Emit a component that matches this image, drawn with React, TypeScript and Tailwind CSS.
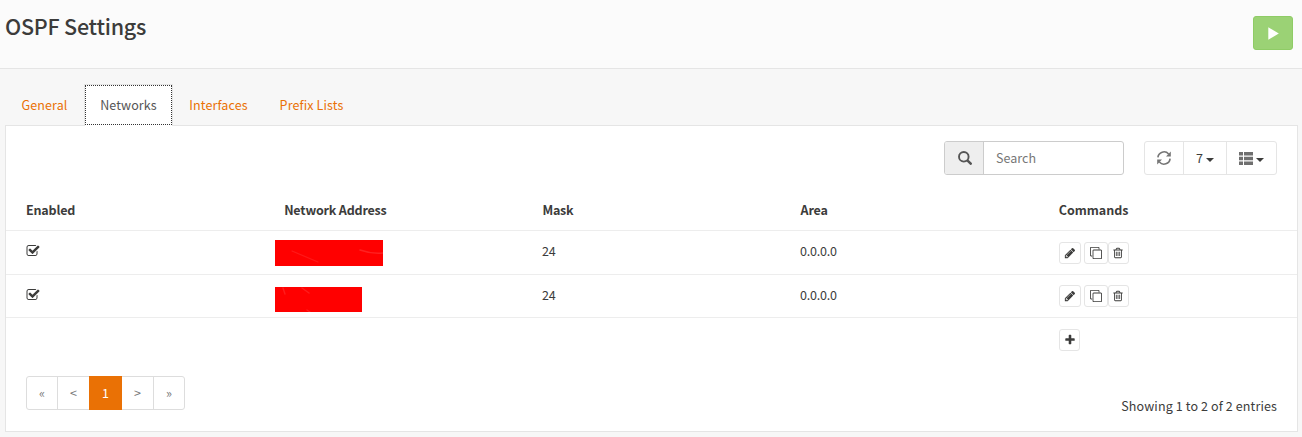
import React from "react";

const icons = {
  check:
    "M1472 930v318q0 119-84.5 203.5t-203.5 84.5h-832q-119 0-203.5-84.5t-84.5-203.5v-832q0-119 84.5-203.5t203.5-84.5h832q63 0 117 25 15 7 18 23 3 17-9 29l-49 49q-10 10-23 10-3 0-9-2-23-6-45-6h-832q-66 0-113 47t-47 113v832q0 66 47 113t113 47h832q66 0 113-47t47-113v-254q0-13 9-22l64-64q10-10 23-10 6 0 12 3 20 8 20 29zm231-489l-814 814q-24 24-57 24t-57-24l-430-430q-24-24-24-57t24-57l110-110q24-24 57-24t57 24l263 263 647-647q24-24 57-24t57 24l110 110q24 24 24 57t-24 57z",
  pencil:
    "M491 1536l91-91-235-235-91 91v107h128v128h107zm523-928q0-22-22-22-10 0-17 7l-542 542q-7 7-7 17 0 22 22 22 10 0 17-7l542-542q7-7 7-17zm-54-192l416 416-832 832h-416v-416zm683 96q0 53-37 90l-166 166-416-416 166-165q36-38 90-38 53 0 91 38l235 234q37 39 37 91z",
  clone:
    "M1664 1632v-1088q0-13-9.5-22.5t-22.5-9.5h-1088q-13 0-22.5 9.5t-9.5 22.5v1088q0 13 9.5 22.5t22.5 9.5h1088q13 0 22.5-9.5t9.5-22.5zm128-1088v1088q0 66-47 113t-113 47h-1088q-66 0-113-47t-47-113v-1088q0-66 47-113t113-47h1088q66 0 113 47t47 113zm-384-384v160h-128v-160q0-13-9.5-22.5t-22.5-9.5h-1088q-13 0-22.5 9.5t-9.5 22.5v1088q0 13 9.5 22.5t22.5 9.5h160v128h-160q-66 0-113-47t-47-113v-1088q0-66 47-113t113-47h1088q66 0 113 47t47 113z",
  trash:
    "M704 736v576q0 14-9 23t-23 9h-64q-14 0-23-9t-9-23v-576q0-14 9-23t23-9h64q14 0 23 9t9 23zm256 0v576q0 14-9 23t-23 9h-64q-14 0-23-9t-9-23v-576q0-14 9-23t23-9h64q14 0 23 9t9 23zm256 0v576q0 14-9 23t-23 9h-64q-14 0-23-9t-9-23v-576q0-14 9-23t23-9h64q14 0 23 9t9 23zm128 724v-948h-896v948q0 22 7 40.5t14.5 27 10.5 8.5h832q3 0 10.5-8.5t14.5-27 7-40.5zm-672-1076h448l-48-117q-7-9-17-11h-317q-10 2-17 11zm928 32v64q0 14-9 23t-23 9h-96v948q0 83-47 143.5t-113 60.5h-832q-66 0-113-58.5t-47-141.5v-952h-96q-14 0-23-9t-9-23v-64q0-14 9-23t23-9h309l70-167q15-37 54-63t79-26h320q40 0 79 26t54 63l70 167h309q14 0 23 9t9 23z",
  plus:
    "M1600 736v192q0 40-28 68t-68 28h-416v416q0 40-28 68t-68 28h-192q-40 0-68-28t-28-68v-416h-416q-40 0-68-28t-28-68v-192q0-40 28-68t68-28h416v-416q0-40 28-68t68-28h192q40 0 68 28t28 68v416h416q40 0 68 28t28 68z",
};

function Icon({ name, className }: { name: keyof typeof icons; className: string }) {
  return (
    <svg viewBox="0 0 1792 1792" fill="currentColor" className={className}>
      <path d={icons[name]} />
    </svg>
  );
}

function SearchIcon() {
  return (
    <svg viewBox="0 0 14 14" className="ml-px size-3.5" fill="none" stroke="#555">
      <circle cx="5.8" cy="5.8" r="4.8" strokeWidth="1.9" />
      <path d="M9.6 9.6l3.1 3.1" strokeWidth="2.5" strokeLinecap="round" />
    </svg>
  );
}

function RefreshIcon() {
  return (
    <svg viewBox="0 0 14 14" className="size-3.5" fill="none" stroke="#757575" strokeWidth="1.6">
      <path d="M0.9 6.4A6.1 6.1 0 0 1 11.6 3" />
      <path d="M13.1 7.6A6.1 6.1 0 0 1 2.4 11" />
      <path d="M13.8 0.4v5H9z" fill="#757575" stroke="none" />
      <path d="M0.2 13.6v-5H5z" fill="#757575" stroke="none" />
    </svg>
  );
}

function ListIcon() {
  return (
    <svg viewBox="0 0 14 13" className="h-[13px] w-3.5" fill="#6f6f6f">
      <path d="M0 0h4v3.6H0zM5 0h9v3.6H5zM0 4.7h4v3.6H0zM5 4.7h9v3.6H5zM0 9.4h4V13H0zM5 9.4h9V13H5z" />
    </svg>
  );
}

function Caret() {
  return (
    <svg viewBox="0 0 8 4" className="mt-[3px] h-1 w-2" fill="#3c3c3b">
      <path d="M0 0h8L4 4z" />
    </svg>
  );
}

const headers = ["Enabled", "Network Address", "Mask", "Area", "Commands"];

function Commands() {
  return (
    <div className="flex text-[#3c3c3b]">
      <button className="mr-[3px] flex h-[22px] w-[22px] items-center justify-center rounded-[3px] border border-[#e5e5e5] bg-white">
        <Icon name="pencil" className="size-3" />
      </button>
      <button className="flex h-[22px] w-6 items-center justify-center rounded-[3px] border border-[#e5e5e5] bg-white">
        <Icon name="clone" className="size-3" />
      </button>
      <button className="flex h-[22px] w-[21px] items-center justify-center rounded-[3px] border border-[#e5e5e5] bg-white">
        <Icon name="trash" className="size-3" />
      </button>
    </div>
  );
}

export default function App() {
  return (
    <div className="h-[437px] w-[1302px] overflow-hidden bg-[#f7f7f7] font-['Noto_Sans_CJK_SC',sans-serif] text-[12.54px] leading-5 tracking-[0.11px] text-[#3c3c3b]">
      <header className="flex h-[69px] justify-between border-b border-[#e5e5e5] bg-[#fbfbfb] pr-[9px] pl-[5px]">
        <h1 className="mt-3 text-[21.5px] leading-7 font-medium tracking-[-0.23px]">OSPF Settings</h1>
        <button className="mt-4 flex h-[34px] w-10 items-center justify-center rounded-[3px] border border-[#8fcc66] bg-[#9bd275]">
          <svg viewBox="0 0 11 13" className="h-[13px] w-[11px]" fill="#fff">
            <path d="M0.3 0.3L10.8 6.5L0.3 12.7z" />
          </svg>
        </button>
      </header>

      <nav className="relative z-10 -mb-px flex h-[57px] items-end pl-[5px] text-[#ea7105]">
        <a className="flex h-[42px] w-[79px] items-center justify-center">General</a>
        <a className="h-[42px] w-[89px] border border-b-0 border-[#e5e5e5] bg-white pb-px text-[#555]">
          <span className="flex h-10 items-center justify-center border border-dotted border-[#333]">Networks</span>
        </a>
        <a className="flex h-[42px] w-[91px] items-center justify-center">Interfaces</a>
        <a className="flex h-[42px] w-[95px] items-center justify-center">Prefix Lists</a>
      </nav>

      <main className="ml-[5px] h-[307px] w-[1293px] border border-[#e5e5e5] bg-white">
        <div className="flex h-[64px] justify-end gap-5 pt-[15px] pr-5">
          <div className="flex h-[34px] w-[180px] overflow-hidden rounded-[3px] border border-[#ccc]">
            <span className="flex w-[39px] items-center justify-center border-r border-[#ccc] bg-[#eee]">
              <SearchIcon />
            </span>
            <input
              placeholder="Search"
              className="w-[139px] px-3 leading-5 tracking-normal outline-none placeholder:text-[#777]"
            />
          </div>
          <div className="flex h-[34px] w-[133px] rounded-[3px] border border-[#e5e5e5]">
            <button className="flex w-[39px] items-center justify-center border-r border-[#e5e5e5]">
              <RefreshIcon />
            </button>
            <button className="flex w-[43px] items-center justify-center gap-[3px] border-r border-[#e5e5e5]">
              7<Caret />
            </button>
            <button className="flex w-[49px] items-center justify-center gap-[3px]">
              <ListIcon />
              <Caret />
            </button>
          </div>
        </div>

        <div className="grid h-[41px] grid-cols-5 border-b border-[#ededed] pt-[10px] font-bold tracking-[-0.2px]">
          {headers.map((h) => (
            <div key={h} className={h === "Commands" ? "pl-5 tracking-[-0.05px]" : "pl-5"}>
              {h}
            </div>
          ))}
        </div>
        <div className="grid h-11 grid-cols-5 border-b border-[#ededed] tracking-[-0.2px]">
          <div className="pt-[13px] pl-5">
            <Icon name="check" className="size-3.5" />
          </div>
          <div className="pt-[9px] pl-[11px]">
            <svg viewBox="0 0 108 26" className="h-[26px] w-[108px] bg-[#f00]" fill="none" strokeLinecap="round">
              <path d="M17 11L43 22" stroke="#ff1818" strokeWidth="1.2" />
              <path d="M85 10Q96 14 108 13" stroke="#ff2020" strokeWidth="1.6" />
            </svg>
          </div>
          <div className="pt-[10px] pl-[19.6px]">24</div>
          <div className="pt-[10px] pl-[19.4px]">0.0.0.0</div>
          <div className="pt-[11px] pl-5">
            <Commands />
          </div>
        </div>
        <div className="grid h-[43px] grid-cols-5 border-b border-[#ededed] tracking-[-0.2px]">
          <div className="pt-[13px] pl-5">
            <Icon name="check" className="size-3.5" />
          </div>
          <div className="pt-3 pl-[11px]">
            <svg viewBox="0 0 87 25" className="h-[25px] w-[87px] bg-[#f00]" fill="none" strokeLinecap="round">
              <path d="M8 1L10 7M27 1L34 6M32 23L35 25" stroke="#ff1c1c" strokeWidth="1.4" />
            </svg>
          </div>
          <div className="pt-[10px] pl-[19.6px]">24</div>
          <div className="pt-[10px] pl-[19.4px]">0.0.0.0</div>
          <div className="pt-[10px] pl-5">
            <Commands />
          </div>
        </div>
        <div className="grid h-[58px] grid-cols-5">
          <div className="col-start-5 pt-[11px] pl-5">
            <button className="flex h-[22px] w-[21px] items-center justify-center rounded-[3px] border border-[#e5e5e5] pl-px">
              <Icon name="plus" className="size-3" />
            </button>
          </div>
        </div>

        <div className="flex justify-between px-5">
          <div className="flex h-[34px] w-[159px] rounded-[3px] border border-[#ddd] text-[#777]">
            <a className="flex w-[31px] items-center justify-center border-r border-[#ddd]">«</a>
            <a className="flex w-[31px] items-center justify-center">&lt;</a>
            <a className="-my-px flex w-[33px] items-center justify-center bg-[#ea7105] text-white">1</a>
            <a className="flex w-8 items-center justify-center border-r border-[#ddd]">&gt;</a>
            <a className="flex w-[30px] items-center justify-center">»</a>
          </div>
          <div className="pt-5">Showing 1 to 2 of 2 entries</div>
        </div>
      </main>
    </div>
  );
}
